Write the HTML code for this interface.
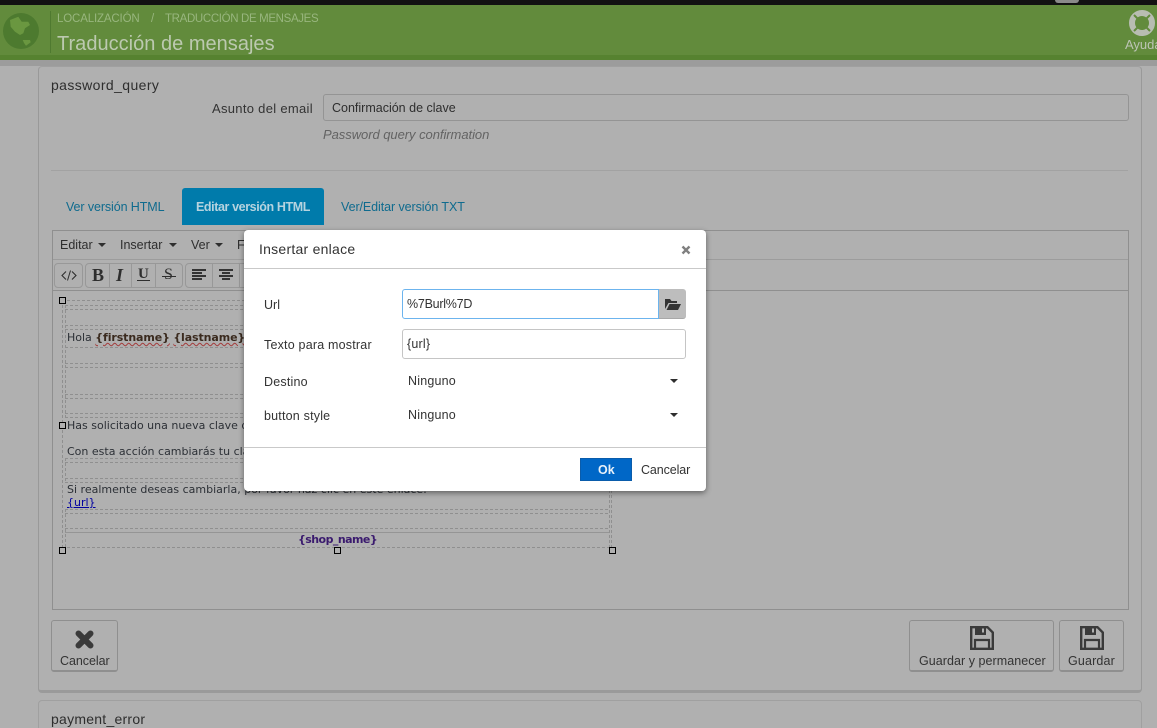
<!DOCTYPE html>
<html lang="es"><head><meta charset="utf-8"><title>Traducción de mensajes</title>
<style>
html,body{margin:0;padding:0;width:1157px;height:728px;overflow:hidden;background:#b0b0b0}
body{position:relative;font-family:"Liberation Sans",sans-serif;font-size:13px;color:#333}
.a{position:absolute;white-space:nowrap}
.b{position:absolute;box-sizing:border-box}
.v{font-family:"DejaVu Sans",sans-serif;font-size:11px;color:#2c3036;letter-spacing:0}
.dh{position:absolute;height:1px;left:65px;width:544px;background:repeating-linear-gradient(90deg,#8f8f8f 0 3px,transparent 3px 5px)}
.dv{position:absolute;width:1px;background:repeating-linear-gradient(180deg,#8f8f8f 0 3px,transparent 3px 5px)}
.h{position:absolute;width:7px;height:7px;border:1px solid #000;background:#b0b0b0;box-sizing:border-box}
.btn{position:absolute;box-sizing:border-box;border:1px solid #8f8f8f;border-bottom-width:2px;border-radius:3px;background:#b0b0b0}
.tb{position:absolute;box-sizing:border-box;border:1px solid #989898;border-radius:4px;top:263px;height:25px}
.sep{position:absolute;top:264px;width:1px;height:23px;background:#989898}
.caret{position:absolute;width:0;height:0;border-left:4px solid transparent;border-right:4px solid transparent;border-top:4px solid #2e2e2e}
</style></head><body>
<div class="b" style="left:0;top:0;width:1157px;height:5px;background:#121212"></div>
<div class="b" style="left:1055px;top:0;width:24px;height:3px;background:#8a8a8a;border-radius:0 0 12px 12px"></div>
<div class="b" style="left:0;top:5px;width:1157px;height:51px;background:#628b3c"></div>
<div class="b" style="left:0;top:55px;width:1157px;height:5px;background:#568230"></div>
<div class="b" style="left:0;top:60px;width:1157px;height:6px;background:#9c9c9c"></div>

<svg class="a" style="left:3px;top:13px" width="36" height="36" viewBox="0 0 36 36"><circle cx="18" cy="18" r="18" fill="#4d7a2f"/><path d="M7 7 15.300 3.700 18.700 8.700H25.300L27 12 22 15.300 20.300 20.300 17 22 12 18.700 7.700 13.700zM19.700 27H27L27.700 29.300 23 32.700 21 30z" fill="#6a9740"/></svg>
<div class="b" style="left:50px;top:11px;width:1px;height:42px;background:#4f7a30"></div>
<span class="a" style="left:57px;top:13px;font-size:11.5px;color:#98b67e;letter-spacing:-.15px">LOCALIZACIÓN</span>
<span class="a" style="left:151px;top:13px;font-size:11.5px;color:#98b67e">/</span>
<span class="a" style="left:165px;top:13px;font-size:11.5px;color:#98b67e;letter-spacing:-.35px">TRADUCCIÓN DE MENSAJES</span>
<span class="a" style="left:57px;top:33px;font-size:20px;color:#bcc9b0;letter-spacing:.02px">Traducción de mensajes</span>
<svg class="a" style="left:1128px;top:9px" width="28" height="28" viewBox="0 0 28 28"><circle cx="14" cy="14" r="10" fill="none" stroke="#b8bdb2" stroke-width="6"/><path d="M6 6l5 5M22 6l-5 5M6 22l5-5M22 22l-5-5" stroke="#628b3c" stroke-width="2"/></svg>
<span class="a" style="left:1125px;top:37px;font-size:13px;color:#bcc4b4">Ayuda</span>

<div class="b" style="left:38px;top:66px;width:1104px;height:627px;border:1px solid #999;border-bottom:3px solid #9a9a9a;border-top-color:#a0a0a0;border-radius:4px;background:#b0b0b0"></div>
<span class="a" style="left:51px;top:77px;font-size:14px;color:#2e2e2e;letter-spacing:.4px">password_query</span>
<span class="a" style="left:212px;top:101px;color:#333;letter-spacing:.3px">Asunto del email</span>
<div class="b" style="left:323px;top:94px;width:806px;height:27px;border:1px solid #949494;border-radius:3px"></div>
<span class="a" style="left:332px;top:101px;font-size:12.5px;color:#2e2e2e;letter-spacing:0">Confirmación de clave</span>
<span class="a" style="left:323px;top:127px;font-size:13px;font-style:italic;color:#636363;letter-spacing:-.05px">Password query confirmation</span>
<div class="b" style="left:51px;top:170px;width:1077px;height:1px;background:#a2a2a2"></div>

<span class="a" style="left:66px;top:200px;font-size:12.5px;color:#0f6b8e;letter-spacing:-.1px">Ver versión HTML</span>
<div class="b" style="left:182px;top:188px;width:142px;height:37px;background:#007bab;border-radius:3px 3px 0 0"></div>
<span class="a" style="left:196px;top:200px;font-size:12.5px;font-weight:bold;color:#b5d3df;letter-spacing:-.4px">Editar versión HTML</span>
<span class="a" style="left:341px;top:200px;font-size:12.5px;color:#0f6b8e;letter-spacing:-.08px">Ver/Editar versión TXT</span>

<!-- editor -->
<div class="b" style="left:52px;top:230px;width:1077px;height:380px;border:1px solid #8f8f8f"></div>
<div class="b" style="left:53px;top:259px;width:1075px;height:1px;background:#9c9c9c"></div>
<div class="b" style="left:53px;top:290px;width:1075px;height:1px;background:#8f8f8f"></div>
<span class="a" style="left:60px;top:238px;font-size:12.5px;color:#2e2e2e">Editar</span><i class="caret" style="left:98px;top:243px"></i>
<span class="a" style="left:120px;top:238px;font-size:12.5px;color:#2e2e2e">Insertar</span><i class="caret" style="left:169px;top:243px"></i>
<span class="a" style="left:191px;top:238px;font-size:12.5px;color:#2e2e2e">Ver</span><i class="caret" style="left:215px;top:243px"></i>
<span class="a" style="left:237px;top:238px;font-size:12.5px;color:#2e2e2e">F</span>

<div class="tb" style="left:54px;width:29px"></div>
<svg class="a" style="left:61px;top:270px" width="16" height="11" viewBox="0 0 16 11"><path d="M5 1.500 1 5.500 5 9.500M11 1.500 15 5.500 11 9.500" fill="none" stroke="#2e2e2e" stroke-width="1.100"/><path d="M9.500 .5 6.500 10.500" fill="none" stroke="#2e2e2e" stroke-width="1"/></svg>
<div class="tb" style="left:85px;width:98px"></div>
<i class="sep" style="left:109px"></i><i class="sep" style="left:131px"></i><i class="sep" style="left:155px"></i>
<span class="a" style="left:92px;top:265px;font:bold 18px 'Liberation Serif',serif;color:#2e2e2e">B</span>
<span class="a" style="left:116px;top:265px;font:italic bold 18px 'Liberation Serif',serif;color:#2e2e2e">I</span>
<span class="a" style="left:138px;top:266px;font:bold 15px 'Liberation Serif',serif;color:#2e2e2e">U</span>
<div class="b" style="left:137px;top:280px;width:13px;height:1px;background:#2e2e2e"></div>
<span class="a" style="left:164px;top:266px;font:16px 'Liberation Serif',serif;color:#2e2e2e">S</span>
<div class="b" style="left:162px;top:276px;width:14px;height:1px;background:#2e2e2e"></div>
<div class="tb" style="left:185px;width:70px"></div>
<i class="sep" style="left:212px"></i><i class="sep" style="left:239px"></i>
<svg class="a" style="left:192px;top:269px" width="15" height="12"><path d="M0 1h14M0 4h10M0 7h14M0 10h10" stroke="#222" stroke-width="1.700"/></svg>
<svg class="a" style="left:219px;top:269px" width="15" height="12"><path d="M0 1h14M3 4h8M0 7h14M3 10h8" stroke="#222" stroke-width="1.700"/></svg>

<!-- content -->
<div class="dh" style="top:300px;left:62px;width:550px"></div>
<div class="dh" style="top:305px"></div><div class="dh" style="top:309px"></div>
<div class="dh" style="top:325px"></div><div class="dh" style="top:329px"></div>
<div class="dh" style="top:347px"></div>
<div class="dh" style="top:363px"></div><div class="dh" style="top:367px"></div>
<div class="dh" style="top:394px"></div><div class="dh" style="top:398px"></div>
<div class="dh" style="top:413px"></div><div class="dh" style="top:417px"></div>
<div class="dh" style="top:458px"></div><div class="dh" style="top:462px"></div>
<div class="dh" style="top:478px"></div><div class="dh" style="top:482px"></div>
<div class="dh" style="top:509px"></div><div class="dh" style="top:513px"></div>
<div class="dh" style="top:528px"></div>
<div class="b" style="left:65px;top:532px;width:544px;height:1px;background:#959595"></div>
<div class="dh" style="top:547px;left:62px;width:550px"></div>
<div class="dv" style="left:62px;top:300px;height:247px"></div>
<div class="dv" style="left:65px;top:305px;height:112px"></div>
<div class="dv" style="left:65px;top:458px;height:24px"></div>
<div class="dv" style="left:65px;top:509px;height:38px"></div>
<div class="dv" style="left:609px;top:300px;height:247px"></div>
<div class="dv" style="left:611px;top:300px;height:247px"></div>
<i class="h" style="left:59px;top:297px"></i>
<i class="h" style="left:59px;top:422px"></i>
<i class="h" style="left:59px;top:547px"></i>
<i class="h" style="left:334px;top:547px"></i>
<i class="h" style="left:609px;top:547px"></i>
<span class="a v" style="left:67px;top:331px">Hola <b style="color:#3a2a1e;letter-spacing:-.1px;text-decoration:underline wavy #a33b3b 1px">{firstname}</b> <b style="color:#3a2a1e;letter-spacing:-.1px;text-decoration:underline wavy #a33b3b 1px">{lastname}</b></span>
<span class="a v" style="left:67px;top:419px">Has solicitado una nueva clave de acceso</span>
<span class="a v" style="left:67px;top:445px">Con esta acción cambiarás tu clave</span>
<span class="a v" style="left:67px;top:483px">Si realmente deseas cambiarla, por favor haz clic en este enlace:</span>
<span class="a v" style="left:67px;top:496px;color:#0000a0;text-decoration:underline">{url}</span>
<span class="a v" style="left:298px;top:533px;font-weight:bold;color:#3a1a6e;letter-spacing:-.55px">{shop_name}</span>

<!-- footer buttons -->
<div class="btn" style="left:51px;top:620px;width:67px;height:52px"></div>
<svg class="a" style="left:75px;top:630px" width="19" height="19" viewBox="0 0 19 19"><path d="M3.500 3.500 15.500 15.500M15.500 3.500 3.500 15.500" stroke="#3a3a3a" stroke-width="6" stroke-linecap="round"/></svg>
<span class="a" style="left:60px;top:654px;font-size:12.5px;color:#333;letter-spacing:-.05px">Cancelar</span>
<div class="btn" style="left:909px;top:620px;width:145px;height:52px"></div>
<svg class="a" style="left:970px;top:626px" width="24" height="24" viewBox="0 0 24 24"><path d="M1.200 1.200h16.300l5.300 5.300v16.300H1.200z" fill="none" stroke="#3a3a3a" stroke-width="2.400"/><path d="M5 1h11v8H5z" fill="#3a3a3a"/><path d="M12 2.500h2v4h-2z" fill="#b0b0b0"/><path d="M5 23v-9h14v9" fill="none" stroke="#3a3a3a" stroke-width="2.200"/></svg>
<span class="a" style="left:919px;top:654px;font-size:12.5px;color:#333;letter-spacing:.05px">Guardar y permanecer</span>
<div class="btn" style="left:1059px;top:620px;width:65px;height:52px"></div>
<svg class="a" style="left:1080px;top:626px" width="24" height="24" viewBox="0 0 24 24"><path d="M1.200 1.200h16.300l5.300 5.300v16.300H1.200z" fill="none" stroke="#3a3a3a" stroke-width="2.400"/><path d="M5 1h11v8H5z" fill="#3a3a3a"/><path d="M12 2.500h2v4h-2z" fill="#b0b0b0"/><path d="M5 23v-9h14v9" fill="none" stroke="#3a3a3a" stroke-width="2.200"/></svg>
<span class="a" style="left:1068px;top:654px;font-size:12.5px;color:#333;letter-spacing:.15px">Guardar</span>

<div class="b" style="left:38px;top:700px;width:1104px;height:40px;border:1px solid #a0a0a0;border-radius:4px"></div>
<span class="a" style="left:51px;top:711px;font-size:14px;color:#2e2e2e;letter-spacing:.25px">payment_error</span>

<!-- modal -->
<div class="b" style="left:244px;top:230px;width:462px;height:261px;background:#fff;border-radius:4px;box-shadow:0 2px 6px rgba(0,0,0,.45)"></div>
<span class="a" style="left:259px;top:241px;font-size:14px;color:#333;letter-spacing:.25px">Insertar enlace</span>
<svg class="a" style="left:681px;top:245px" width="10" height="10" viewBox="0 0 10 10"><path d="M1.500 1.500l7 7M8.500 1.500l-7 7" stroke="#808080" stroke-width="2.400"/></svg>
<div class="b" style="left:244px;top:268px;width:462px;height:1px;background:#c9c9c9"></div>
<span class="a" style="left:264px;top:298px;font-size:12.5px;color:#333">Url</span>
<div class="b" style="left:402px;top:289px;width:257px;height:30px;border:1px solid #6cb4ee;border-radius:3px 0 0 3px;background:#fff"></div>
<span class="a" style="left:407px;top:297px;font-size:12.5px;color:#333;letter-spacing:-.25px">%7Burl%7D</span>
<div class="b" style="left:659px;top:289px;width:27px;height:30px;background:#bdbdbd;border-radius:0 3px 3px 0;border-bottom:1px solid #a8a8a8"></div>
<svg class="a" style="left:664px;top:298px" width="17" height="12" viewBox="0 0 17 12"><path d="M1 11V1h5l1.500 2H13v2H4.500L1 11zm1.500 1L5.500 6H17l-3 6z" fill="#333"/></svg>
<span class="a" style="left:264px;top:338px;font-size:12.5px;color:#333;letter-spacing:.2px">Texto para mostrar</span>
<div class="b" style="left:402px;top:329px;width:284px;height:30px;border:1px solid #c5c5c5;border-radius:3px"></div>
<span class="a" style="left:407px;top:337px;font-size:12.5px;color:#333;letter-spacing:.2px">{url}</span>
<span class="a" style="left:264px;top:375px;font-size:12.5px;color:#333;letter-spacing:.2px">Destino</span>
<span class="a" style="left:408px;top:374px;font-size:12.5px;color:#333;letter-spacing:.2px">Ninguno</span>
<i class="caret" style="left:670px;top:379px"></i>
<span class="a" style="left:264px;top:409px;font-size:12.5px;color:#333;letter-spacing:.2px">button style</span>
<span class="a" style="left:408px;top:408px;font-size:12.5px;color:#333;letter-spacing:.2px">Ninguno</span>
<i class="caret" style="left:670px;top:413px"></i>
<div class="b" style="left:244px;top:447px;width:462px;height:1px;background:#c9c9c9"></div>
<div class="b" style="left:580px;top:458px;width:52px;height:23px;background:#0067c7;border:1px solid #0a5cab"></div>
<span class="a" style="left:598px;top:463px;font-size:12.5px;font-weight:bold;color:#e8f1fa">Ok</span>
<span class="a" style="left:641px;top:463px;font-size:12.5px;color:#333;letter-spacing:-.1px">Cancelar</span>
</body></html>
